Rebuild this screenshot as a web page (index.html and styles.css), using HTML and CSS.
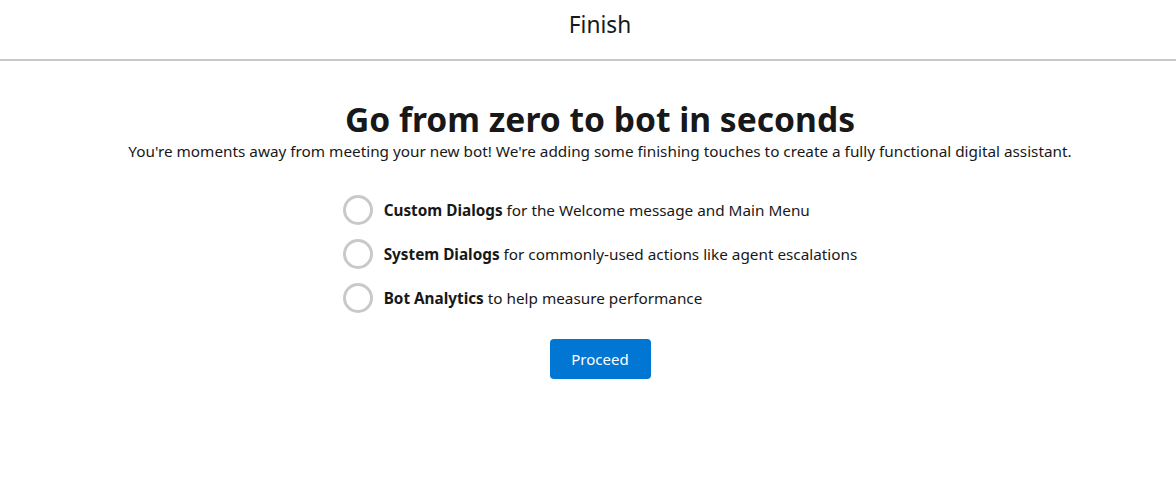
FILE: index.html
```html
<!DOCTYPE html>
<html>
<head>
<meta charset="utf-8">
<link rel="stylesheet" href="styles.css">
</head>
<body>
<header class="header"><h1 class="header-title">Finish</h1></header>
<main class="main">
  <h2 class="title">Go from zero to bot in seconds</h2>
  <p class="subtitle">You're moments away from meeting your new bot! We're adding some finishing touches to create a fully functional digital assistant.</p>
  <ul class="steps">
    <li class="step"><span class="circle"></span><span class="step-text"><b>Custom Dialogs</b> for the Welcome message and Main Menu</span></li>
    <li class="step"><span class="circle"></span><span class="step-text"><b>System Dialogs</b> for commonly-used actions like agent escalations</span></li>
    <li class="step"><span class="circle"></span><span class="step-text"><b>Bot Analytics</b> to help measure performance</span></li>
  </ul>
  <button class="btn">Proceed</button>
</main>
</body>
</html>
```
FILE: styles.css
```css
html, body { margin: 0; padding: 0; background: #fff; }
body { font-family: "Noto Sans", "Open Sans", sans-serif; color: #181818; }
.header {
  height: 61px;
  box-sizing: border-box;
  padding-bottom: 10px;
  border-bottom: 2px solid #c9c9c9;
  display: flex;
  align-items: center;
  justify-content: center;
  padding-left: 24px;
}
.header-title { margin: 0; font-size: 22.7px; font-weight: 400; color: #181818; }
.main {
  padding-left: 24px;
  display: flex;
  flex-direction: column;
  align-items: center;
}
.title { margin: 38px 0 0; font-size: 33.6px; font-weight: 700; line-height: 40px; }
.subtitle { margin: 2px 0 0; font-size: 15.3px; line-height: 20px; }
.steps { list-style: none; margin: 33px 0 0; padding: 0; display: flex; flex-direction: column; gap: 12px; }
.step { display: flex; align-items: center; gap: 11px; font-size: 15.3px; height: 32px; }
.circle { width: 24px; height: 24px; border: 3px solid #c9c9c9; border-radius: 50%; flex: none; }
.step-text b { font-weight: 700; }
.btn {
  margin-top: 25px;
  width: 101px; height: 40px;
  background: #0176d3; color: #fff; border: none; border-radius: 4px;
  font-family: inherit; font-size: 15px;
}
```
